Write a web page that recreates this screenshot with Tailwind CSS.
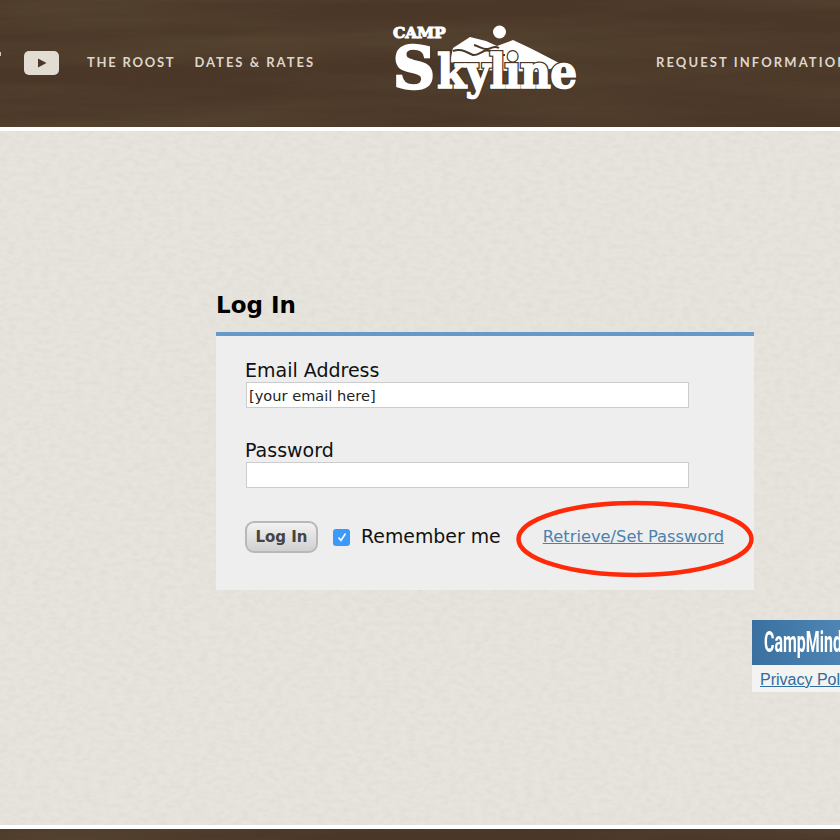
<!DOCTYPE html>
<html><head><meta charset="utf-8"><title>Camp Skyline</title>
<script src="https://cdn.jsdelivr.net/npm/@tailwindcss/browser@4"></script></head>
<body class="m-0 bg-[#e7e4de] font-['DejaVu_Sans',sans-serif]">
<svg width="0" height="0" class="absolute">
  <filter id="wood" x="0" y="0" width="100%" height="100%">
    <feTurbulence type="fractalNoise" baseFrequency="0.003 0.035" numOctaves="5" seed="11"/>
    <feColorMatrix values="0 0 0 0 0.12  0 0 0 0 0.08  0 0 0 0 0.04  0.9 0 0 0 -0.3"/>
  </filter>
  <filter id="paper" x="0" y="0" width="100%" height="100%">
    <feTurbulence type="fractalNoise" baseFrequency="0.12 0.22" numOctaves="3" seed="3"/>
    <feColorMatrix values="0 0 0 0 0.5  0 0 0 0 0.48  0 0 0 0 0.44  0.28 0 0 0 -0.1"/>
  </filter>
</svg>
<div class="w-[840px] h-[840px] overflow-hidden flex flex-col relative">
  <header class="relative h-[127px] shrink-0 bg-[#4a3728] overflow-hidden">
    <svg class="absolute inset-0 w-full h-full"><rect width="840" height="127" filter="url(#wood)"/></svg>
    <div class="relative flex items-start h-full w-[1100px] pl-[24px]">
      <span class="absolute left-0 top-[52px] w-[1px] h-[4px] bg-[#cfc8bc]"></span>
      <svg class="mt-[51px] shrink-0" width="35" height="24" viewBox="0 0 35 24"><rect width="35" height="24" rx="5" fill="#e2dcd2"/><path d="M14 7.500v9l8.500-4.500z" fill="#4a3728"/></svg>
      <nav class="flex gap-[19px] ml-[28px] mt-[54px] font-['Lato',sans-serif] font-bold text-[13px] leading-4 tracking-[1.75px] text-[#ddd6ca] whitespace-nowrap">
        <a>THE ROOST</a><a class="tracking-[2px]">DATES &amp; RATES</a>
      </nav>
      <svg class="absolute left-[382px] top-[14px]" width="205" height="90" viewBox="382 14 205 90">
        <circle cx="499.500" cy="32" r="6.500" fill="#fff"/>
        <path d="M453 48 470 37 486 41 497 46 513 40 532 49 563 65 540 72 480 70 450 62z" fill="#fff"/>
        <path d="M453 51c8-3 13 1 20 4 6 1 12-8 18-3 5 4 8 3 14 3M474 45c5 1 9 5 14 4 5-1 6-4 11-1" fill="none" stroke="#4a3728" stroke-width="2"/>
        <text x="393" y="38" fill="#fff" stroke="#fff" stroke-width="1" class="font-['DejaVu_Serif',serif] font-bold text-[15.500px]" letter-spacing="-.2">CAMP</text>
        <g class="font-['DejaVu_Serif_Condensed','DejaVu_Serif',serif] font-bold">
          <text x="437" y="88" stroke="#4a3728" stroke-width="4" class="text-[47px]" letter-spacing="-.7">kyline</text>
          <text x="437" y="88" fill="#fff" stroke="#fff" stroke-width="1.400" class="text-[47px]" letter-spacing="-.7">kyline</text>
          <text x="393" y="88" fill="#fff" stroke="#fff" stroke-width="2.500" class="font-['DejaVu_Serif',serif] text-[58px]">S</text>
        </g>
      </svg>
      <a class="absolute left-[656px] top-[54px] font-['Lato',sans-serif] font-bold text-[13px] leading-4 tracking-[2.1px] text-[#ddd6ca] whitespace-nowrap">REQUEST INFORMATION</a>
    </div>
  </header>
  <div class="h-[4px] shrink-0 bg-white"></div>
  <main class="relative flex-1 min-h-0 overflow-hidden">
    <svg class="absolute inset-0 w-full h-full"><rect width="840" height="700" filter="url(#paper)"/></svg>
    <div class="relative pl-[216px] pt-[161px]">
      <h1 class="m-0 text-[23px] leading-[26px] font-bold text-black">Log In</h1>
      <section class="relative mt-[14px] w-[538px] h-[258px] bg-[#eeeeee] border-t-4 border-[#6699c8] pl-[29px] pt-[22px]">
        <label class="block text-[19px] leading-[24px] text-[#111]">Email Address</label>
        <div class="ml-[1px] w-[443px] h-[26px] bg-white border border-[#cccccc] pl-[2px] text-[14.600px] leading-[25px] text-[#222]">[your email here]</div>
        <label class="block mt-[30px] text-[19px] leading-[24px] text-[#111]">Password</label>
        <div class="ml-[1px] w-[443px] h-[26px] bg-white border border-[#cccccc]"></div>
        <div class="flex items-center mt-[33px] h-[32px]">
          <button class="w-[73px] h-[32px] rounded-[9px] border-2 border-[#b8b8b8] bg-gradient-to-b from-[#f2f2f2] to-[#d0d0d0] text-[15px] font-bold text-[#444]">Log In</button>
          <span class="ml-[15px] w-[17px] h-[17px] rounded-[3px] bg-[#3b99fc] flex items-center justify-center">
            <svg width="12" height="12" viewBox="0 0 12 12"><path d="M2.500 6.500 5 9.500 9.500 2.500" fill="none" stroke="#fff" stroke-width="1.600"/></svg>
          </span>
          <span class="ml-[11px] mb-[2px] text-[18.900px] text-[#111]">Remember me</span>
          <a class="ml-[42px] text-[16.300px] text-[#4a82ad] underline">Retrieve/Set Password</a>
        </div>
        <svg class="absolute left-[299px] top-[164px]" width="244" height="80" viewBox="0 0 244 80"><ellipse cx="120" cy="39" rx="116.500" ry="36" fill="none" stroke="#ff2a0a" stroke-width="4.500"/></svg>
      </section>
      <div class="ml-[536px] mt-[30px] w-[200px]">
        <div class="h-[45px] bg-[radial-gradient(circle_at_85%_30%,#8fbfe6,#4f86b4_45%,#3a709f)] overflow-hidden pl-[12px] text-white">
          <span class="block origin-left scale-x-[.55] font-['Roboto',sans-serif] font-bold text-[29px] leading-[45px] whitespace-nowrap">CampMinder</span>
        </div>
        <div class="h-[27px] bg-[#f3f3f1] pl-[8px] font-['Liberation_Sans',sans-serif] text-[16px] leading-[29px] text-[#2f6c9f] underline whitespace-nowrap">Privacy Policy</div>
      </div>
    </div>
  </main>
  <div class="h-[4px] shrink-0 bg-white"></div>
  <footer class="relative h-[11px] shrink-0 bg-[#4a3728] overflow-hidden"><svg class="absolute inset-0 w-full h-full"><rect width="840" height="11" filter="url(#wood)"/></svg></footer>
</div>
</body></html>
